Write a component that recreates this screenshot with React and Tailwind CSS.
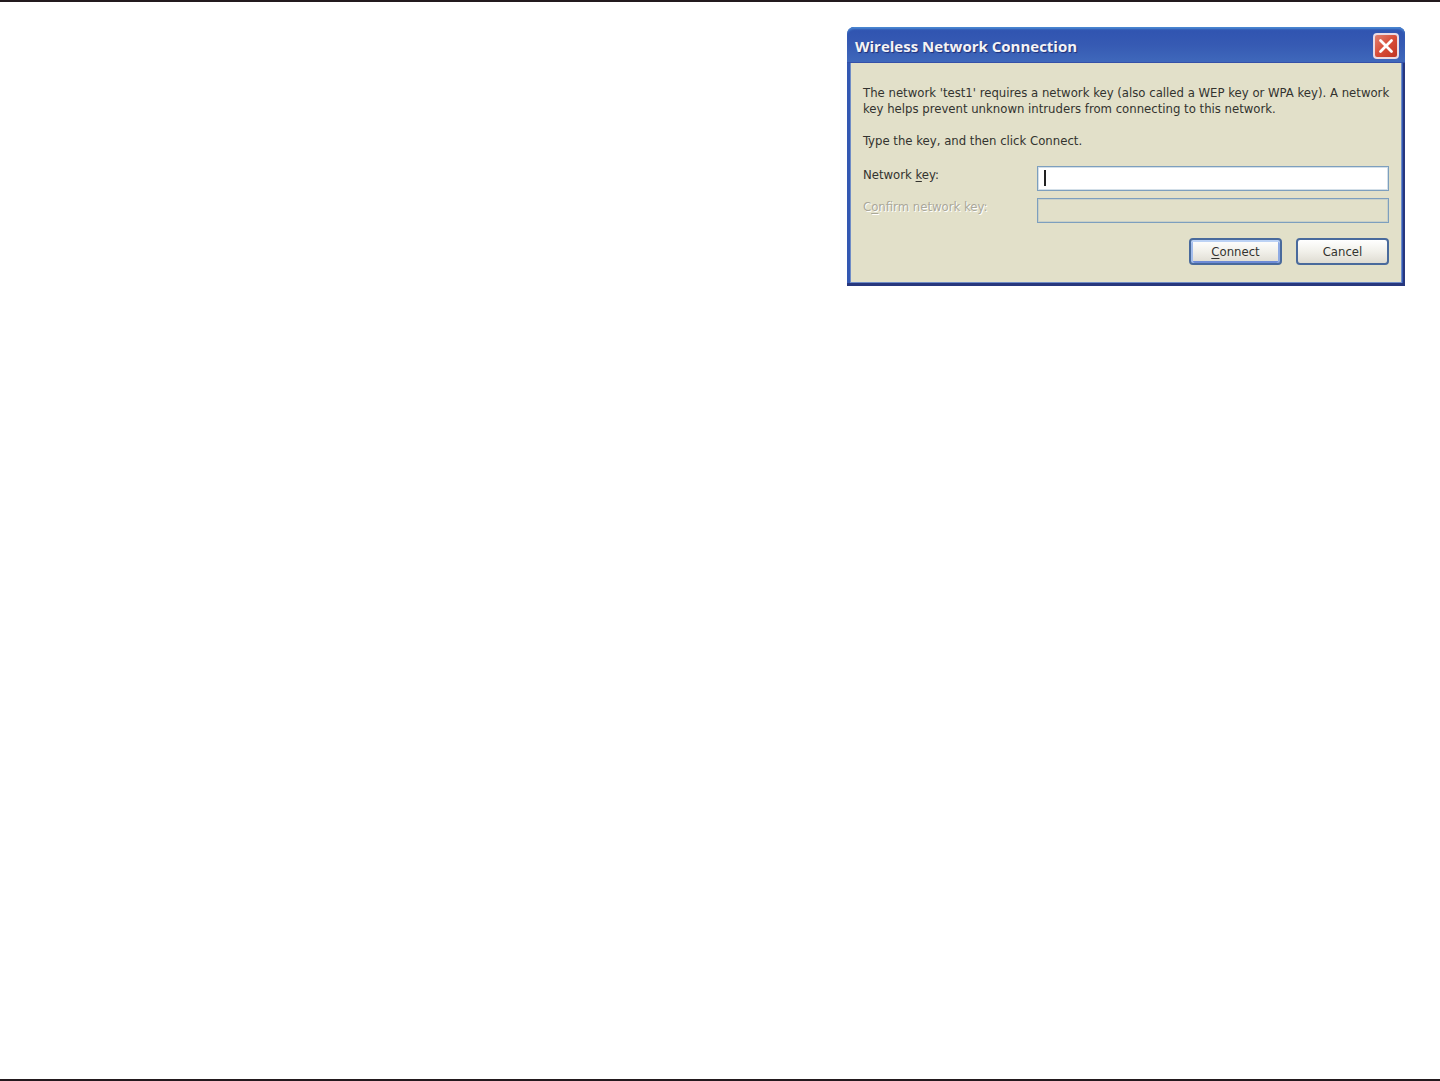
function TitleBar() {
  return (
    <header className="flex h-9 items-center justify-between rounded-t-[7px] border-b border-[#3550a8] bg-linear-to-b from-[#2f53b0] via-[#365ab3] to-[#3f68bb] pl-2 pr-1.5 shadow-[inset_0_3px_2px_-1px_#4a88d2]">
      <h1
        id="dialog-title"
        className="pt-0.5 whitespace-nowrap font-['Open_Sans',sans-serif] text-[15px] leading-6 font-bold text-[#f4f3f6] [text-shadow:1px_1px_1px_#1d2f78]"
      >
        Wireless Network Connection
      </h1>
      <button
        type="button"
        aria-label="Close"
        className="mt-0.5 flex size-[26px] items-center justify-center rounded-[4px] border-2 border-[#eadbe4] bg-linear-to-br from-[#e08070] via-[#d84c38] to-[#bf3522]"
      >
        <svg viewBox="0 0 16 16" className="size-4" fill="none" stroke="#fff" strokeWidth="2.8" strokeLinecap="round">
          <path d="M2.5 2.5 13.5 13.5M13.5 2.5 2.5 13.5" />
        </svg>
      </button>
    </header>
  );
}

const buttonBase =
  "h-[27px] w-[93px] rounded-[4px] border-2 border-[#496a9c] bg-linear-to-b from-white via-[#f1f0ea] to-[#dfdcd2] text-center leading-5";

export default function App() {
  return (
    <main className="flex min-h-screen items-start justify-end border-y-2 border-[#231a1e] bg-white pt-[25px] pr-[35px] font-['DejaVu_Sans_Condensed','DejaVu_Sans',sans-serif] text-[13px] leading-4 text-[#33332f]">
      <section
        role="dialog"
        aria-labelledby="dialog-title"
        className="w-full max-w-[558px] rounded-t-[8px] bg-[#3358b2] shadow-[inset_-2px_-3px_0_#27377d]"
      >
        <TitleBar />
        <form
          className="mr-[3px] mb-[3px] ml-[3px] border-x border-b border-[#6f8cc6] bg-[#e2e0c9] pt-[22px] pr-3 pb-[17px] pl-3"
          onSubmit={(e) => e.preventDefault()}
        >
          <p className="-mr-2">
            The network 'test1' requires a network key (also called a WEP key or WPA key). A network
            key helps prevent unknown intruders from connecting to this network.
          </p>
          <p className="mt-4">Type the key, and then click Connect.</p>
          <div className="mt-[17px] grid grid-cols-[174px_1fr] gap-y-[7px]">
            <label htmlFor="key" className="pt-px">
              Network <u className="underline-offset-2">k</u>ey:
            </label>
            <div className="relative">
              <input
                id="key"
                type="text"
                className="block h-[25px] w-full border border-[#7d9fbe] bg-white px-1.5 caret-transparent shadow-[inset_0_0_0_1px_#d3dfe8] outline-none"
              />
              <span aria-hidden="true" className="absolute top-1 left-[7px] h-4 w-0.5 bg-[#222]" />
            </div>
            <label htmlFor="confirm" className="pt-px text-[#aaa89a] [text-shadow:1px_1px_0_#fff]">
              C<u className="underline-offset-2">o</u>nfirm network key:
            </label>
            <input
              id="confirm"
              type="text"
              disabled
              className="block h-[25px] w-full border border-[#7d9fbe] bg-[#e2e0c9] px-1.5 shadow-[inset_0_0_0_1px_#c9d0c8]"
            />
          </div>
          <div className="mt-[15px] flex justify-end gap-[14px]">
            <button type="submit" className={`${buttonBase} shadow-[inset_0_2px_0_#bcd2f4,inset_2px_0_0_#a3bdec,inset_-2px_0_0_#8fabe4,inset_0_-2px_0_#6d8bd6]`}>
              <u className="underline-offset-2">C</u>onnect
            </button>
            <button type="button" className={buttonBase}>
              Cancel
            </button>
          </div>
        </form>
      </section>
    </main>
  );
}
